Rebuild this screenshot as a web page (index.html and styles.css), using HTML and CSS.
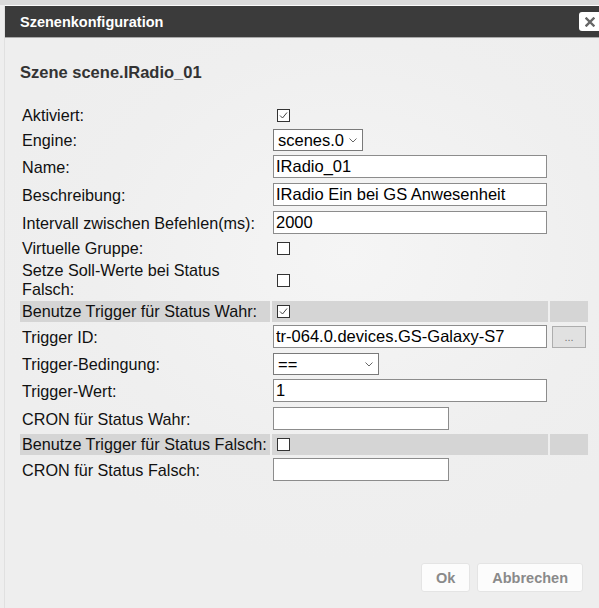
FILE: index.html
```html
<!DOCTYPE html>
<html lang="de">
<head>
<meta charset="utf-8">
<title>Szenenkonfiguration</title>
<link rel="stylesheet" href="styles.css">
</head>
<body>
<div class="topbar"></div>
<div class="dialog">
  <div class="titlebar">
    <span class="title">Szenenkonfiguration</span>
    <span class="close"><svg width="10" height="10" viewBox="0 0 10 10"><path d="M1.5 1.5L8.5 8.5M8.5 1.5L1.5 8.5" stroke="#666" stroke-width="2.4" stroke-linecap="square"/></svg></span>
  </div>
  <div class="content">
    <h2 class="heading">Szene scene.IRadio_01</h2>
    <table class="form">
      <colgroup><col class="col-label"><col class="col-field"><col class="col-extra"></colgroup>
      <tr>
        <td class="label">Aktiviert:</td>
        <td class="field"><span class="cb"><svg width="11" height="11" viewBox="0 0 11 11"><path d="M2 5.5L4.5 8L9 2.5" fill="none" stroke="#444" stroke-width="1"/></svg></span></td>
        <td class="extra"></td>
      </tr>
      <tr>
        <td class="label">Engine:</td>
        <td class="field"><span class="select sel-engine"><span>scenes.0</span><svg width="8" height="5" viewBox="0 0 8 5"><path d="M0.5 0.5L4 4L7.5 0.5" fill="none" stroke="#666" stroke-width="1"/></svg></span></td>
        <td class="extra"></td>
      </tr>
      <tr>
        <td class="label">Name:</td>
        <td class="field"><input class="text" type="text" value="IRadio_01"></td>
        <td class="extra"></td>
      </tr>
      <tr>
        <td class="label">Beschreibung:</td>
        <td class="field"><input class="text" type="text" value="IRadio Ein bei GS Anwesenheit"></td>
        <td class="extra"></td>
      </tr>
      <tr>
        <td class="label">Intervall zwischen Befehlen(ms):</td>
        <td class="field"><input class="text" type="text" value="2000"></td>
        <td class="extra"></td>
      </tr>
      <tr>
        <td class="label">Virtuelle Gruppe:</td>
        <td class="field"><span class="cb"></span></td>
        <td class="extra"></td>
      </tr>
      <tr>
        <td class="label">Setze Soll-Werte bei Status<br>Falsch:</td>
        <td class="field"><span class="cb"></span></td>
        <td class="extra"></td>
      </tr>
      <tr class="hl">
        <td class="label nowrap">Benutze Trigger für Status Wahr:</td>
        <td class="field"><span class="cb"><svg width="11" height="11" viewBox="0 0 11 11"><path d="M2 5.5L4.5 8L9 2.5" fill="none" stroke="#444" stroke-width="1"/></svg></span></td>
        <td class="extra"></td>
      </tr>
      <tr>
        <td class="label">Trigger ID:</td>
        <td class="field"><input class="text" type="text" value="tr-064.0.devices.GS-Galaxy-S7"></td>
        <td class="extra"><span class="dots">...</span></td>
      </tr>
      <tr>
        <td class="label">Trigger-Bedingung:</td>
        <td class="field"><span class="select sel-cond"><span>==</span><svg width="8" height="5" viewBox="0 0 8 5"><path d="M0.5 0.5L4 4L7.5 0.5" fill="none" stroke="#666" stroke-width="1"/></svg></span></td>
        <td class="extra"></td>
      </tr>
      <tr>
        <td class="label">Trigger-Wert:</td>
        <td class="field"><input class="text" type="text" value="1"></td>
        <td class="extra"></td>
      </tr>
      <tr>
        <td class="label">CRON für Status Wahr:</td>
        <td class="field"><input class="text short" type="text" value=""></td>
        <td class="extra"></td>
      </tr>
      <tr class="hl">
        <td class="label nowrap">Benutze Trigger für Status Falsch:</td>
        <td class="field"><span class="cb"></span></td>
        <td class="extra"></td>
      </tr>
      <tr>
        <td class="label">CRON für Status Falsch:</td>
        <td class="field"><input class="text short" type="text" value=""></td>
        <td class="extra"></td>
      </tr>
    </table>
  </div>
  <div class="buttons">
    <button class="btn" type="button">Ok</button>
    <button class="btn" type="button">Abbrechen</button>
  </div>
</div>
</body>
</html>
```
FILE: styles.css
```css
* { box-sizing: border-box; }
html, body { margin: 0; height: 100%; }
body {
  background: radial-gradient(ellipse 60% 50% at 58% 42%, #f5f5f5 0%, #efefef 70%, #eeeeee 100%);
  font-family: "Liberation Sans", Arial, sans-serif;
  overflow: hidden;
}
.topbar { height: 5px; background: #dadada; }
.dialog {
  margin-left: 4px;
  border-left: 1px solid #e0e0e0;
  border-top: 1px solid #fbfbfb;
  height: 603px;
  display: flex;
  flex-direction: column;
}
.titlebar {
  height: 32px;
  background: #3b3b3b;
  border-bottom: 1px solid #a9a9a9;
  display: flex;
  align-items: center;
  justify-content: space-between;
  padding-left: 15px;
}
.title {
  color: #fff;
  font-weight: bold;
  font-size: 14.5px;
  line-height: 17px;
  padding-top: 1px;
}
.close {
  width: 22px;
  height: 19px;
  background: #fff;
  border-radius: 3px;
  margin-right: -2px;
  display: flex;
  align-items: center;
  justify-content: center;
}
.content { padding-left: 13px; }
.heading {
  margin: 25px 0 0 2px;
  font-size: 16.5px;
  line-height: 19px;
  color: #333;
  font-weight: bold;
}
.form {
  table-layout: fixed;
  width: 572px;
  border-spacing: 2px;
  margin-top: 21px;
  font-size: 16.2px;
  line-height: 19px;
  color: #111;
}
.col-label { width: 250px; }
.col-field { width: 276px; }
.col-extra { width: 38px; }
.form td { padding: 0; vertical-align: middle; }
.label { padding: 0 2px !important; }
.nowrap { white-space: nowrap; }
.field { padding: 0 1px !important; }
.extra { padding: 0 2px !important; }
.hl td { background: #d5d5d5; }
.text {
  display: block;
  width: 274px;
  height: 23px;
  margin: 1px 0 2px;
  border: 1px solid #8c8c8c;
  padding: 0 2px;
  background: #fff;
  font-family: "Liberation Sans", Arial, sans-serif;
  font-size: 16.5px;
  color: #000;
  outline: none;
}
.short { width: 176px; }
.select {
  display: flex;
  align-items: center;
  justify-content: space-between;
  height: 22px;
  margin: 1px 0;
  border: 1px solid #7a7a7a;
  background: #fff;
  padding: 0 5px 0 4px;
  color: #000;
  font-size: 16.5px;
}
.sel-engine { width: 90px; }
.sel-cond { width: 106px; }
.cb {
  display: flex;
  align-items: center;
  justify-content: center;
  width: 13px;
  height: 13px;
  margin: 4px 3px 4px 4px;
  border: 1px solid #333;
  background: #fff;
}
.dots {
  display: flex;
  align-items: flex-end;
  justify-content: center;
  width: 34px;
  height: 22px;
  background: #e1e1e1;
  border: 1px solid #adadad;
  color: #777;
  font-size: 11px;
  line-height: 11px;
  padding-bottom: 4px;
}
.buttons {
  margin-top: auto;
  display: flex;
  justify-content: flex-end;
  gap: 7px;
  padding: 0 16px 16px 0;
}
.btn {
  height: 29px;
  padding: 0 14px;
  border: 1px solid #e4e4e4;
  border-radius: 3px;
  background: #fcfcfc;
  color: #8a8a8a;
  font-family: "Liberation Sans", Arial, sans-serif;
  font-weight: bold;
  font-size: 14.5px;
}
```
